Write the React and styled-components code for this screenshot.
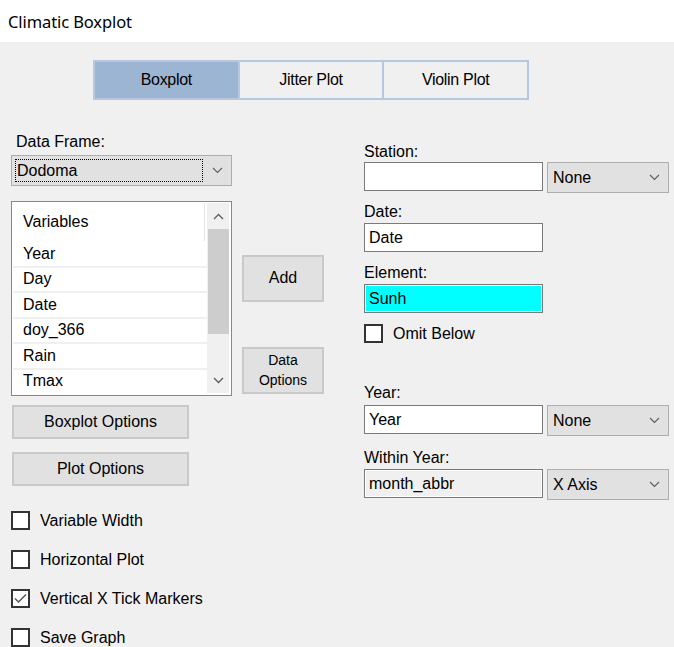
import React from 'react';
import styled, { createGlobalStyle } from 'styled-components';

const GlobalStyle = createGlobalStyle`
  html, body {
    margin: 0;
    padding: 0;
    background: #f0f0f0;
  }
  * {
    box-sizing: border-box;
  }
`;

const Window = styled.div`
  width: 674px;
  height: 647px;
  overflow: hidden;
  background: #f0f0f0;
  font-family: "Liberation Sans", Arial, sans-serif;
  font-size: 16px;
  color: #000;
`;

const TitleBar = styled.div`
  height: 42px;
  background: #ffffff;
  display: flex;
  align-items: center;
  padding-left: 8px;
  font-family: "Noto Sans", "Open Sans", sans-serif;
  font-size: 16.5px;
  letter-spacing: -0.1px;
`;

const Body = styled.div`
  padding: 18px 0 0 11px;
`;

const Tabs = styled.div`
  display: flex;
  margin-left: 82px;
  width: 436px;
  height: 40px;
  border: 2px solid #b4c8e0;
  background: #b4c8e0;
  gap: 2px;
`;

const Tab = styled.div`
  flex: 1;
  display: flex;
  align-items: center;
  justify-content: center;
  background: ${(p) => (p.$active ? '#9cb5d3' : '#f0f0f0')};
  font-size: 16px;
  letter-spacing: -0.3px;
`;

const Columns = styled.div`
  display: flex;
  align-items: flex-start;
  gap: 40px;
`;

const LeftCol = styled.div`
  width: 313px;
  padding-top: 33px;
  display: flex;
  flex-direction: column;
  align-items: flex-start;
`;

const RightCol = styled.div`
  width: 306px;
  padding-top: 43px;
  display: flex;
  flex-direction: column;
  align-items: flex-start;
`;

const Label = styled.div`
  height: 18px;
  line-height: 18px;
  margin-top: ${(p) => p.$mt || 0}px;
  margin-left: ${(p) => p.$ml || 0}px;
  white-space: nowrap;
`;

const Combo = styled.div`
  position: relative;
  width: ${(p) => p.$w}px;
  height: 31px;
  margin-top: ${(p) => p.$mt || 0}px;
  background: #e1e1e1;
  border: 1px solid #adadad;
  display: flex;
  align-items: center;
  padding-left: 5px;
  flex-shrink: 0;
`;

const FocusText = styled.div`
  width: 188px;
  height: 23px;
  border: 1px dotted #000;
  display: flex;
  align-items: center;
  padding-left: 1px;
  margin-left: -2px;
`;

const ComboArrow = styled.svg`
  position: absolute;
  right: 8px;
  top: 50%;
  margin-top: -4px;
`;

const Chevron = ({ up }) => (
  <svg width="11" height="7" viewBox="0 0 11 7">
    <polyline
      points={up ? '1,6 5.5,1.5 10,6' : '1,1 5.5,5.5 10,1'}
      fill="none"
      stroke="#606060"
      strokeWidth="1.4"
    />
  </svg>
);

const ComboBox = ({ w, mt, children, focus }) => (
  <Combo $w={w} $mt={mt}>
    {focus ? <FocusText>{children}</FocusText> : children}
    <ComboArrow width="11" height="7" viewBox="0 0 11 7">
      <polyline points="1,1 5.5,5.5 10,1" fill="none" stroke="#606060" strokeWidth="1.2" />
    </ComboArrow>
  </Combo>
);

const ListArea = styled.div`
  display: flex;
  margin-top: 15px;
  gap: 10px;
`;

const ListBox = styled.div`
  width: 221px;
  height: 195px;
  border: 1px solid #828790;
  background: #ffffff;
  display: flex;
  padding: 1px 2px 2px 1px;
`;

const Items = styled.div`
  flex: 1;
  display: flex;
  flex-direction: column;
  overflow: hidden;
`;

const Header = styled.div`
  height: 38px;
  flex-shrink: 0;
  display: flex;
  align-items: center;
  padding-left: 10px;
  border-right: 1px solid #e5e5e5;
  margin-right: 2px;
  margin-bottom: 1px;
`;

const Item = styled.div`
  height: 25.5px;
  flex-shrink: 0;
  display: flex;
  align-items: center;
  padding-left: 10px;
  border-bottom: 2px solid #f0f0f0;
`;

const ScrollBar = styled.div`
  width: 22px;
  background: #f0f0f0;
  display: flex;
  flex-direction: column;
  align-items: center;
`;

const ScrollBtn = styled.div`
  height: 26px;
  display: flex;
  align-items: center;
  justify-content: center;
  flex-shrink: 0;
`;

const Thumb = styled.div`
  width: 21px;
  height: 105px;
  background: #cdcdcd;
`;

const Track = styled.div`
  flex: 1;
`;

const SideButtons = styled.div`
  display: flex;
  flex-direction: column;
  padding-top: 54px;
  gap: 45px;
`;

const Button = styled.div`
  width: ${(p) => p.$w}px;
  height: ${(p) => p.$h}px;
  margin-top: ${(p) => p.$mt || 0}px;
  margin-left: ${(p) => p.$ml || 0}px;
  background: #e1e1e1;
  border: 2px solid #c9c9c9;
  display: flex;
  align-items: center;
  justify-content: center;
  text-align: center;
  font-size: ${(p) => p.$fs || 16}px;
  line-height: 1.4;
  flex-shrink: 0;
`;

const Checks = styled.div`
  display: flex;
  flex-direction: column;
  gap: 20px;
  margin-top: 25px;
`;

const CheckRow = styled.div`
  display: flex;
  align-items: center;
  height: 19px;
  margin-top: ${(p) => p.$mt || 0}px;
  white-space: nowrap;
`;

const Box = styled.div`
  width: 19px;
  height: 19px;
  border: 2px solid #333333;
  background: #ffffff;
  margin-right: 10px;
  display: flex;
  align-items: center;
  justify-content: center;
`;

const Check = ({ label, checked, mt }) => (
  <CheckRow $mt={mt}>
    <Box>
      {checked && (
        <svg width="13" height="11" viewBox="0 0 13 11">
          <polyline points="1,5.5 4.5,9 12,1.5" fill="none" stroke="#555" strokeWidth="1.5" />
        </svg>
      )}
    </Box>
    {label}
  </CheckRow>
);

const FieldRow = styled.div`
  display: flex;
  align-items: flex-start;
  gap: 4px;
  margin-top: ${(p) => p.$mt || 0}px;
`;

const TextBox = styled.div`
  width: 179px;
  height: 29px;
  margin-top: ${(p) => p.$mt || 0}px;
  border: 1px solid #7a7a7a;
  background: #ffffff;
  padding: 1px;
  flex-shrink: 0;
`;

const TextFill = styled.div`
  height: 100%;
  display: flex;
  align-items: center;
  padding-left: 3px;
  background: ${(p) => p.$bg || '#ffffff'};
`;

const Field = ({ value, bg, mt }) => (
  <TextBox $mt={mt}>
    <TextFill $bg={bg}>{value}</TextFill>
  </TextBox>
);

const variables = ['Year', 'Day', 'Date', 'doy_366', 'Rain', 'Tmax'];

export default function App() {
  return (
    <Window>
      <GlobalStyle />
      <TitleBar>Climatic Boxplot</TitleBar>
      <Body>
        <Tabs>
          <Tab $active>Boxplot</Tab>
          <Tab>Jitter Plot</Tab>
          <Tab>Violin Plot</Tab>
        </Tabs>
        <Columns>
          <LeftCol>
            <Label $ml={5}>Data Frame:</Label>
            <ComboBox w={221} mt={4} focus>
              Dodoma
            </ComboBox>
            <ListArea>
              <ListBox>
                <Items>
                  <Header>Variables</Header>
                  {variables.map((v) => (
                    <Item key={v}>{v}</Item>
                  ))}
                </Items>
                <ScrollBar>
                  <ScrollBtn>
                    <Chevron up />
                  </ScrollBtn>
                  <Thumb />
                  <Track />
                  <ScrollBtn>
                    <Chevron />
                  </ScrollBtn>
                </ScrollBar>
              </ListBox>
              <SideButtons>
                <Button $w={82} $h={47}>Add</Button>
                <Button $w={82} $h={47} $fs={14}>
                  Data
                  <br />
                  Options
                </Button>
              </SideButtons>
            </ListArea>
            <Button $w={177} $h={34} $mt={9} $ml={1}>
              Boxplot Options
            </Button>
            <Button $w={177} $h={34} $mt={13} $ml={1}>
              Plot Options
            </Button>
            <Checks>
              <Check label="Variable Width" />
              <Check label="Horizontal Plot" />
              <Check label="Vertical X Tick Markers" checked />
              <Check label="Save Graph" />
            </Checks>
          </LeftCol>
          <RightCol>
            <Label>Station:</Label>
            <FieldRow $mt={1}>
              <Field value="" />
              <ComboBox w={122}>None</ComboBox>
            </FieldRow>
            <Label $mt={10}>Date:</Label>
            <Field value="Date" mt={2} />
            <Label $mt={12}>Element:</Label>
            <Field value="Sunh" bg="#00ffff" mt={2} />
            <Check label="Omit Below" mt={11} />
            <Label $mt={41}>Year:</Label>
            <FieldRow $mt={3}>
              <Field value="Year" />
              <ComboBox w={122}>None</ComboBox>
            </FieldRow>
            <Label $mt={13}>Within Year:</Label>
            <FieldRow $mt={2}>
              <Field value="month_abbr" bg="#f0f0f0" />
              <ComboBox w={122}>X Axis</ComboBox>
            </FieldRow>
          </RightCol>
        </Columns>
      </Body>
    </Window>
  );
}
